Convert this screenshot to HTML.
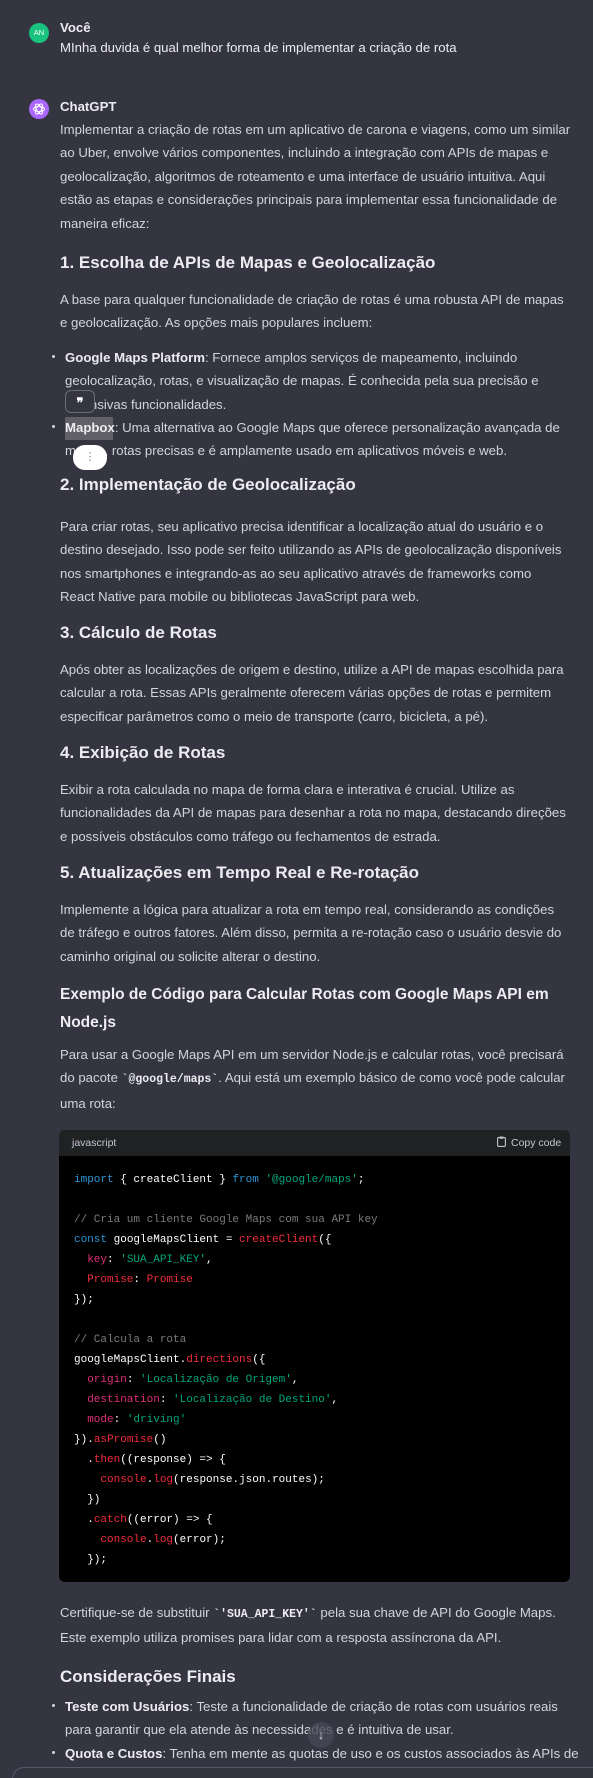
<!DOCTYPE html>
<html><head><meta charset="utf-8"><style>
*{margin:0;padding:0;box-sizing:border-box}
html,body{width:593px;height:1778px;background:#343541;overflow:hidden}
body{position:relative;font-family:"Liberation Sans",sans-serif;color:#d1d5db;font-size:13.2px}
.a{position:absolute;white-space:nowrap}
.p{left:60px;line-height:23.4px}
.h{left:60px;font-weight:bold;color:#ececf1;font-size:17px;line-height:26px}
b{color:#ececf1}
.li{position:absolute;left:65px;white-space:nowrap;line-height:23.4px}
.dot{position:absolute;left:52px;width:3px;height:3px;background:#d1d5db;border-radius:50%}
.code{position:absolute;left:59px;top:1130px;width:511px;height:452px;background:#000;border-radius:6px;overflow:hidden}
.ch{height:26px;background:#202123;color:#c5c5d2;font-size:10.5px;line-height:26px;padding-left:13px;position:relative}
.cb{font-family:"Liberation Mono",monospace;font-size:11px;line-height:20px;color:#fff;padding:14px 0 0 15px;white-space:pre}
.k{color:#2e95d3}.s{color:#00a67d}.r{color:#f22c3d}.m{color:#df3079}.c{color:#7a7a7a}
code{font-family:"Liberation Mono",monospace;font-weight:bold;color:#ececf1;font-size:11.5px}
</style></head><body>

<div class="a" style="left:29px;top:23px;width:20px;height:20px;border-radius:50%;background:#19c37d;color:#fff;font-size:7.5px;line-height:20px;text-align:center">AN</div>
<div class="a" style="left:60px;top:20px;font-weight:bold;color:#ececf1;line-height:16px">Você</div>
<div class="a p" style="top:36px;color:#ececf1">MInha duvida é qual melhor forma de implementar a criação de rota</div>

<div class="a" style="left:29px;top:99px;width:20px;height:20px;border-radius:50%;background:#ab68ff">
<svg width="20" height="20" viewBox="0 0 20 20"><g fill="none" stroke="#fff" stroke-width="1"><ellipse cx="10" cy="10" rx="5.5" ry="2.6"/><ellipse cx="10" cy="10" rx="5.5" ry="2.6" transform="rotate(60 10 10)"/><ellipse cx="10" cy="10" rx="5.5" ry="2.6" transform="rotate(120 10 10)"/></g></svg></div>
<div class="a" style="left:60px;top:99px;font-weight:bold;color:#ececf1;line-height:16px">ChatGPT</div>

<div class="a p" style="top:118px">Implementar a criação de rotas em um aplicativo de carona e viagens, como um similar<br>ao Uber, envolve vários componentes, incluindo a integração com APIs de mapas e<br>geolocalização, algoritmos de roteamento e uma interface de usuário intuitiva. Aqui<br>estão as etapas e considerações principais para implementar essa funcionalidade de<br>maneira eficaz:</div>

<div class="a h" style="top:250px">1. Escolha de APIs de Mapas e Geolocalização</div>
<div class="a p" style="top:288px">A base para qualquer funcionalidade de criação de rotas é uma robusta API de mapas<br>e geolocalização. As opções mais populares incluem:</div>

<div class="dot" style="top:355px"></div>
<div class="li" style="top:346px"><b>Google Maps Platform</b>: Fornece amplos serviços de mapeamento, incluindo<br>geolocalização, rotas, e visualização de mapas. É conhecida pela sua precisão e<br>extensivas funcionalidades.</div>
<div class="dot" style="top:425px"></div>
<div class="a" style="left:65px;top:417px;width:48px;height:23px;background:#606066"></div>
<div class="li" style="top:416px"><b>Mapbox</b>: Uma alternativa ao Google Maps que oferece personalização avançada de<br>mapas, rotas precisas e é amplamente usado em aplicativos móveis e web.</div>
<div class="a" style="left:65px;top:390px;width:30px;height:23px;border:1px solid #6b6b73;border-radius:6px;background:#343541;color:#fff;font-size:13px;font-weight:bold;text-align:center;line-height:24px">❞</div>
<div class="a" style="left:73px;top:445px;width:34px;height:25px;border-radius:12px;background:#fff;color:#888;font-size:11px;text-align:center;line-height:25px">⋮</div>

<div class="a h" style="top:472px">2. Implementação de Geolocalização</div>
<div class="a p" style="top:515px">Para criar rotas, seu aplicativo precisa identificar a localização atual do usuário e o<br>destino desejado. Isso pode ser feito utilizando as APIs de geolocalização disponíveis<br>nos smartphones e integrando-as ao seu aplicativo através de frameworks como<br>React Native para mobile ou bibliotecas JavaScript para web.</div>

<div class="a h" style="top:620px">3. Cálculo de Rotas</div>
<div class="a p" style="top:658px">Após obter as localizações de origem e destino, utilize a API de mapas escolhida para<br>calcular a rota. Essas APIs geralmente oferecem várias opções de rotas e permitem<br>especificar parâmetros como o meio de transporte (carro, bicicleta, a pé).</div>

<div class="a h" style="top:740px">4. Exibição de Rotas</div>
<div class="a p" style="top:778px">Exibir a rota calculada no mapa de forma clara e interativa é crucial. Utilize as<br>funcionalidades da API de mapas para desenhar a rota no mapa, destacando direções<br>e possíveis obstáculos como tráfego ou fechamentos de estrada.</div>

<div class="a h" style="top:860px">5. Atualizações em Tempo Real e Re-rotação</div>
<div class="a p" style="top:898px">Implemente a lógica para atualizar a rota em tempo real, considerando as condições<br>de tráfego e outros fatores. Além disso, permita a re-rotação caso o usuário desvie do<br>caminho original ou solicite alterar o destino.</div>

<div class="a h" style="top:981px;line-height:28px;font-size:15.5px">Exemplo de Código para Calcular Rotas com Google Maps API em<br>Node.js</div>
<div class="a p" style="top:1043px">Para usar a Google Maps API em um servidor Node.js e calcular rotas, você precisará<br>do pacote <code>`@google/maps`</code>. Aqui está um exemplo básico de como você pode calcular<br>uma rota:</div>

<div class="code">
<div class="ch">javascript<span style="position:absolute;left:438px;top:0;color:#c5c5d2"><svg width="9" height="11" viewBox="0 0 9 11" style="vertical-align:-1px;margin-right:5px"><rect x="0.6" y="1.6" width="7.8" height="8.8" rx="1" fill="none" stroke="#c5c5d2" stroke-width="1.1"/><rect x="2.5" y="0.5" width="4" height="2.2" rx=".5" fill="#c5c5d2"/></svg>Copy code</span></div>
<div class="cb"><span class="k">import</span> { createClient } <span class="k">from</span> <span class="s">'@google/maps'</span>;

<span class="c">// Cria um cliente Google Maps com sua API key</span>
<span class="k">const</span> googleMapsClient = <span class="r">createClient</span>({
  <span class="m">key</span>: <span class="s">'SUA_API_KEY'</span>,
  <span class="r">Promise</span>: <span class="r">Promise</span>
});

<span class="c">// Calcula a rota</span>
googleMapsClient.<span class="r">directions</span>({
  <span class="m">origin</span>: <span class="s">'Localização de Origem'</span>,
  <span class="m">destination</span>: <span class="s">'Localização de Destino'</span>,
  <span class="m">mode</span>: <span class="s">'driving'</span>
}).<span class="r">asPromise</span>()
  .<span class="r">then</span>((response) =&gt; {
    <span class="r">console</span>.<span class="r">log</span>(response.json.routes);
  })
  .<span class="r">catch</span>((error) =&gt; {
    <span class="r">console</span>.<span class="r">log</span>(error);
  });</div>
</div>

<div class="a p" style="top:1601px">Certifique-se de substituir <code>`'SUA_API_KEY'`</code> pela sua chave de API do Google Maps.<br>Este exemplo utiliza promises para lidar com a resposta assíncrona da API.</div>

<div class="a h" style="top:1664px">Considerações Finais</div>
<div class="dot" style="top:1704px"></div>
<div class="li" style="top:1695px"><b>Teste com Usuários</b>: Teste a funcionalidade de criação de rotas com usuários reais<br>para garantir que ela atende às necessidades e é intuitiva de usar.</div>
<div class="dot" style="top:1751px"></div>
<div class="li" style="top:1742px"><b>Quota e Custos</b>: Tenha em mente as quotas de uso e os custos associados às APIs de</div>

<div class="a" style="left:308px;top:1722px;width:26px;height:26px;border-radius:50%;background:rgba(70,72,86,.8);color:#d1d5db;font-size:13px;text-align:center;line-height:26px">↓</div>
<div class="a" style="left:12px;top:1767px;width:600px;height:40px;border:1px solid #565869;border-radius:12px;background:#343541"></div>
</body></html>
